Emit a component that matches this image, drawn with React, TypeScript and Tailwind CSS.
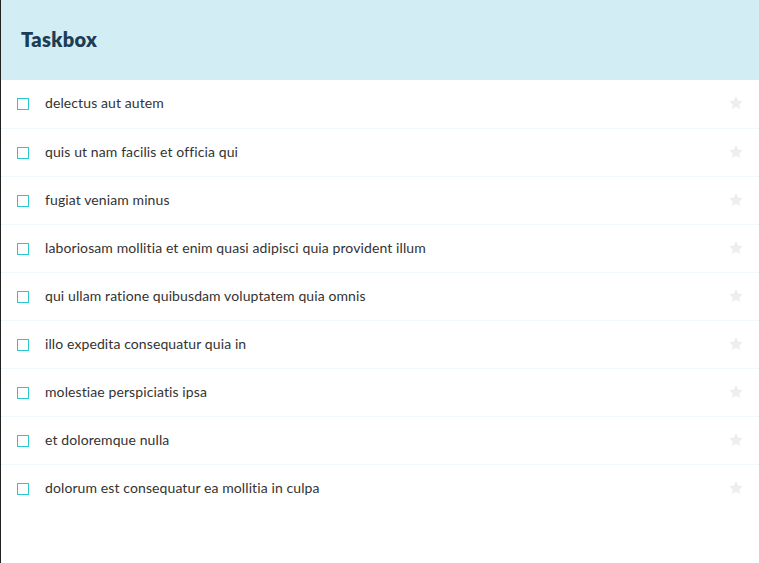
const tasks = [
  "delectus aut autem",
  "quis ut nam facilis et officia qui",
  "fugiat veniam minus",
  "laboriosam mollitia et enim quasi adipisci quia provident illum",
  "qui ullam ratione quibusdam voluptatem quia omnis",
  "illo expedita consequatur quia in",
  "molestiae perspiciatis ipsa",
  "et doloremque nulla",
  "dolorum est consequatur ea mollitia in culpa",
];

const Star = () => (
  <svg width="16" height="16" viewBox="0 0 24 24" fill="#eeeeee">
    <path d="M12 1.8l3.1 6.6 7.1.9-5.2 4.9 1.3 7.1L12 17.8l-6.3 3.5 1.3-7.1-5.2-4.9 7.1-.9z" />
  </svg>
);

const TaskRow = ({ title, first }: { title: string; first: boolean }) => (
  <div
    className={`flex items-center h-12 pl-4 pr-4 ${first ? "" : "border-t border-[#f0f9fb]"}`}
  >
    <div className="w-3 h-3 shrink-0 border border-[#2cc5d2]" />
    <div className="ml-4 text-sm text-[#333333] flex-1 tracking-[0.1px] -mt-0.5">{title}</div>
    <div className="-mr-px -mt-0.5">
      <Star />
    </div>
  </div>
);

export default function App() {
  return (
    <div
      className="min-h-screen border-l border-[#222222] bg-white"
      style={{ fontFamily: "Lato, 'Open Sans', sans-serif" }}
    >
      <div className="h-20 bg-[#d3edf4] flex items-center px-5 pb-0.5">
        <h1 className="text-xl font-extrabold text-[#1c3d55] tracking-[0.3px]">Taskbox</h1>
      </div>
      <div>
        {tasks.map((t, i) => (
          <TaskRow key={i} title={t} first={i === 0} />
        ))}
      </div>
    </div>
  );
}
